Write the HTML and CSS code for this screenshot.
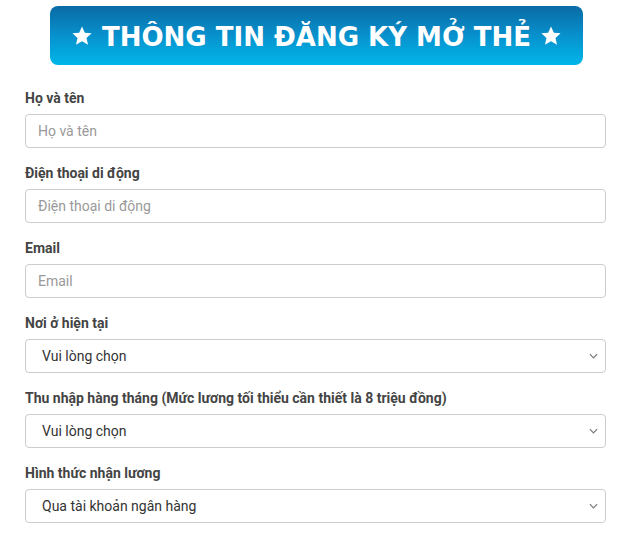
FILE: index.html
```html
<!DOCTYPE html>
<html lang="vi">
<head>
<meta charset="utf-8">
<link rel="stylesheet" href="styles.css">
</head>
<body>
<div class="page">
  <div class="banner">
    <svg class="star" viewBox="0 0 24 24"><path d="M12 1.5l3.1 6.9 7.4.7-5.6 5 1.7 7.4L12 17.6l-6.6 3.9 1.7-7.4-5.6-5 7.4-.7z" fill="#fff"/></svg>
    <span class="banner-text">THÔNG TIN ĐĂNG KÝ MỞ THẺ</span>
    <svg class="star" viewBox="0 0 24 24"><path d="M12 1.5l3.1 6.9 7.4.7-5.6 5 1.7 7.4L12 17.6l-6.6 3.9 1.7-7.4-5.6-5 7.4-.7z" fill="#fff"/></svg>
  </div>
  <form class="form">
    <div class="field">
      <label class="label">Họ và tên</label>
      <input class="control" type="text" placeholder="Họ và tên">
    </div>
    <div class="field">
      <label class="label">Điện thoại di động</label>
      <input class="control" type="text" placeholder="Điện thoại di động">
    </div>
    <div class="field">
      <label class="label">Email</label>
      <input class="control" type="text" placeholder="Email">
    </div>
    <div class="field">
      <label class="label">Nơi ở hiện tại</label>
      <div class="select-wrap">
        <select class="control select"><option>Vui lòng chọn</option></select>
        <svg class="chev" viewBox="0 0 10 6"><path d="M1 1l4 4 4-4" fill="none" stroke="#777" stroke-width="1.3"/></svg>
      </div>
    </div>
    <div class="field">
      <label class="label">Thu nhập hàng tháng (Mức lương tối thiểu cần thiết là 8 triệu đồng)</label>
      <div class="select-wrap">
        <select class="control select"><option>Vui lòng chọn</option></select>
        <svg class="chev" viewBox="0 0 10 6"><path d="M1 1l4 4 4-4" fill="none" stroke="#777" stroke-width="1.3"/></svg>
      </div>
    </div>
    <div class="field">
      <label class="label">Hình thức nhận lương</label>
      <div class="select-wrap">
        <select class="control select"><option>Qua tài khoản ngân hàng</option></select>
        <svg class="chev" viewBox="0 0 10 6"><path d="M1 1l4 4 4-4" fill="none" stroke="#777" stroke-width="1.3"/></svg>
      </div>
    </div>
  </form>
</div>
</body>
</html>
```
FILE: styles.css
```css
* { box-sizing: border-box; }
html, body { margin: 0; padding: 0; background: #fff; }
body { font-family: Roboto, "Liberation Sans", Arial, sans-serif; color: #444; }
.page { padding: 6px 30px 0 25px; }
.banner {
  width: 533px;
  height: 59px;
  margin-left: 25px;
  border-radius: 8px;
  background: linear-gradient(to bottom, #0a6aa4 0%, #0791cd 50%, #00b6ea 100%);
  display: flex;
  align-items: center;
  justify-content: center;
  gap: 9px;
  color: #fff;
}
.star { width: 22px; height: 22px; }
.banner-text {
  font-family: "DejaVu Sans", sans-serif;
  font-weight: 700;
  font-size: 26px;
  letter-spacing: 0;
  line-height: 1;
  padding-top: 3px;
}
.form { margin-top: 23px; display: flex; flex-direction: column; gap: 15px; }
.field { display: flex; flex-direction: column; gap: 6px; }
.label { font-size: 14px; font-weight: 700; line-height: 20px; color: #444; }
.control {
  width: 581px;
  height: 34px;
  border: 1px solid #ccc;
  border-radius: 4px;
  padding: 0 12px;
  font-family: Roboto, "Liberation Sans", Arial, sans-serif;
  font-size: 14px;
  color: #333;
  background: #fff;
  outline: none;
}
.control::placeholder { color: #999; }
.select-wrap { position: relative; width: 581px; }
.select {
  -webkit-appearance: none;
  appearance: none;
  padding-left: 16px;
  display: block;
}
.chev {
  position: absolute;
  right: 8px;
  top: 14px;
  width: 9px;
  height: 6px;
  pointer-events: none;
}
```
